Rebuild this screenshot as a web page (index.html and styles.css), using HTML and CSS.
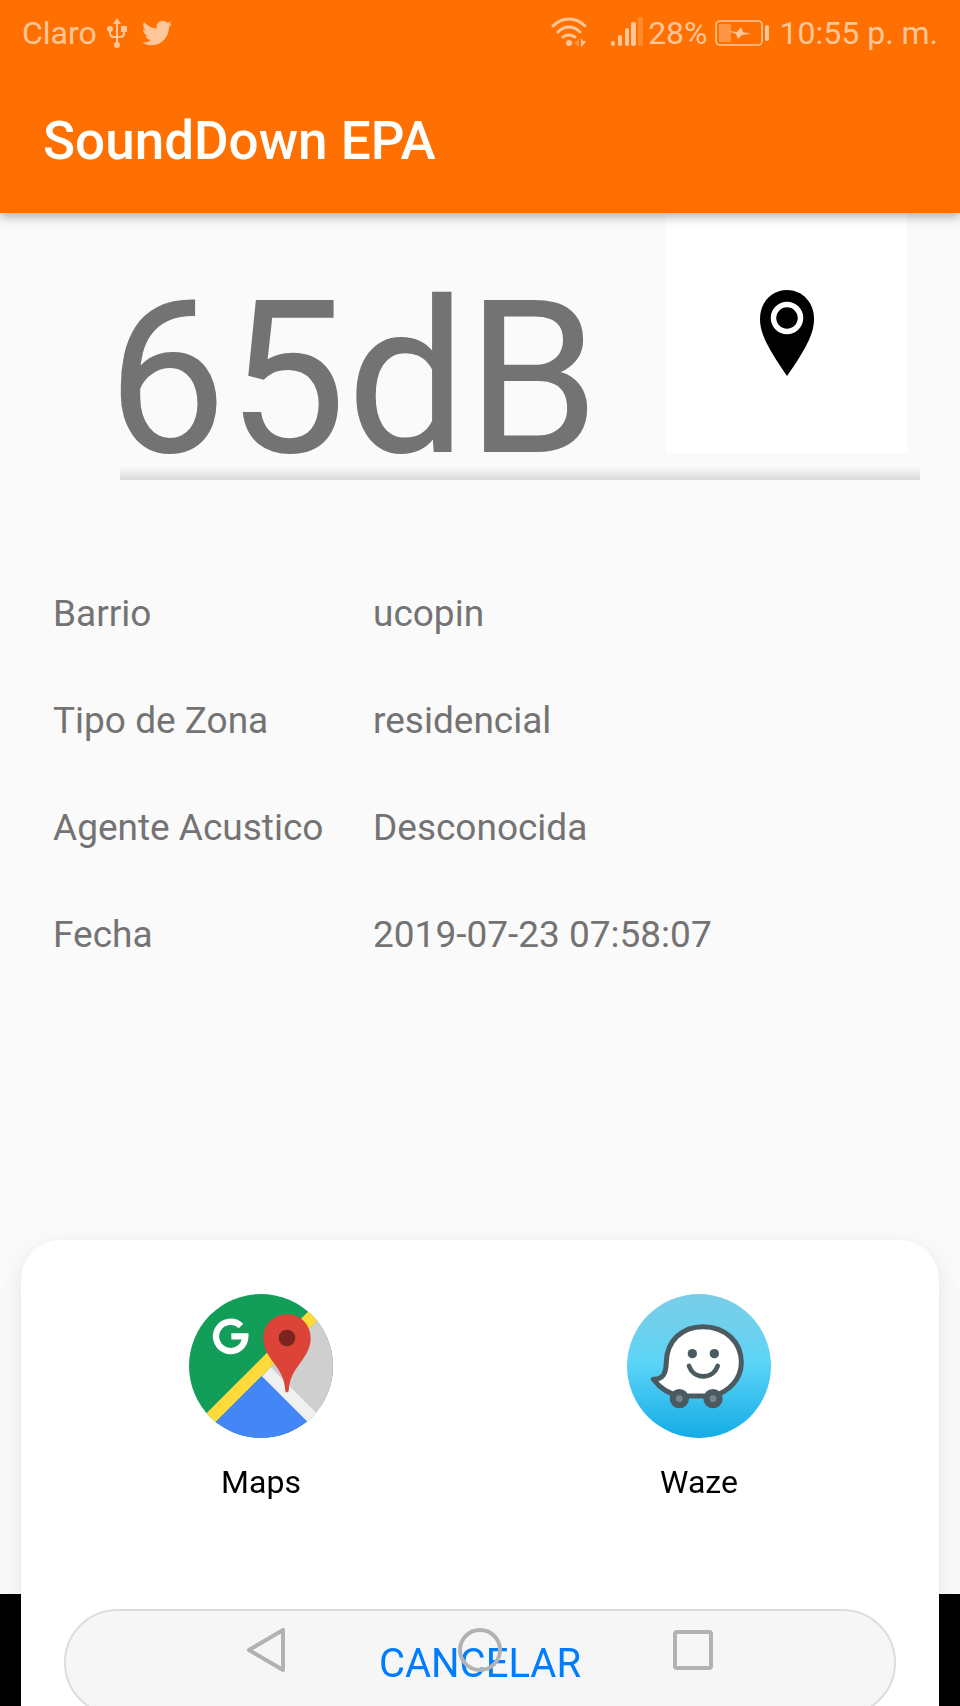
FILE: index.html
```html
<!DOCTYPE html>
<html lang="es">
<head>
<meta charset="utf-8">
<meta name="viewport" content="width=device-width, initial-scale=1">
<title>SoundDown EPA</title>
<link rel="stylesheet" href="styles.css">
</head>
<body>
<div class="screen">
  <header class="top">
    <div class="status">
      <div class="status-group">
        <span class="carrier">Claro</span>
        <svg class="usb" width="20" height="32" viewBox="0 0 20 32" aria-hidden="true">
          <path d="M10 4v22M3 12v4q0 4 4 4h6q4 0 4-4v-4" fill="none" stroke="currentColor" stroke-width="2"/>
          <path d="M10 1l4 6H6z" fill="currentColor"/>
          <circle cx="3" cy="12" r="3" fill="currentColor"/>
          <path d="M14 9h6v6h-6z" fill="currentColor"/>
          <circle cx="10" cy="28" r="3" fill="currentColor"/>
        </svg>
        <svg class="bird" width="30" height="30" viewBox="0 0 24 24" aria-hidden="true">
          <path fill="currentColor" d="M23.953 4.57a10 10 0 0 1-2.825.775 4.958 4.958 0 0 0 2.163-2.723c-.951.555-2.005.959-3.127 1.184a4.92 4.92 0 0 0-8.384 4.482C7.69 8.095 4.067 6.13 1.64 3.162a4.822 4.822 0 0 0-.666 2.475c0 1.71.87 3.213 2.188 4.096a4.904 4.904 0 0 1-2.228-.616v.06a4.923 4.923 0 0 0 3.946 4.827 4.996 4.996 0 0 1-2.212.085 4.936 4.936 0 0 0 4.604 3.417 9.867 9.867 0 0 1-6.102 2.105c-.39 0-.779-.023-1.17-.067a13.995 13.995 0 0 0 7.557 2.209c9.053 0 13.998-7.496 13.998-13.985 0-.21 0-.42-.015-.63A9.935 9.935 0 0 0 24 4.59z"/>
        </svg>
      </div>
      <div class="status-group">
        <svg class="wifi" width="36" height="32" viewBox="0 0 36 32" aria-hidden="true">
          <g fill="none" stroke="currentColor" stroke-width="3" stroke-linecap="round">
            <path d="M2 9Q9 2 18 2T34 9"/>
            <path d="M7 15Q12 10 18 10T29 15"/>
            <path d="M12 20Q15 18 18 18T24 20"/>
          </g>
          <circle cx="18" cy="26" r="3" fill="currentColor"/>
          <path d="M28 22v8l-5-4z" fill="currentColor" opacity=".45"/>
          <path d="M30 21l2 3h3l-1 2-4 4z" fill="currentColor"/>
        </svg>
        <svg class="signal" width="32" height="32" viewBox="0 0 32 32" aria-hidden="true">
          <g fill="currentColor">
            <rect y="24" width="4" height="5" rx="2"/>
            <rect x="7" y="18" width="4" height="11" rx="2"/>
            <rect x="14" y="11" width="4" height="18" rx="2"/>
            <rect x="20" y="5" width="5" height="24" rx="2"/>
            <rect x="27" width="5" height="29" rx="2" opacity=".3"/>
          </g>
        </svg>
        <span class="percent">28%</span>
        <svg class="battery" width="55" height="32" viewBox="0 0 55 32" aria-hidden="true">
          <rect x="1" y="4" width="46" height="24" rx="4" fill="none" stroke="currentColor" stroke-width="1.6"/>
          <rect x="4" y="7" width="12" height="18" fill="currentColor" opacity=".45"/>
          <rect x="50" y="8" width="4" height="16" rx="2" fill="currentColor"/>
          <path fill="currentColor" d="M13 14l9 1 4-5 2 5 8 2-9 1-4 4-2-5z"/>
        </svg>
        <span>10:55 p. m.</span>
      </div>
    </div>
    <h1 class="title">SoundDown EPA</h1>
  </header>

  <main class="content">
    <section class="hero">
      <div class="reading">65dB</div>
      <button class="locate" type="button" aria-label="Ubicación">
        <svg width="54" height="86" viewBox="0 0 54 86" aria-hidden="true">
          <path d="M27 0C12 0 0 12 0 29c0 13 6 27 27 57 21-30 27-44 27-57C54 12 42 0 27 0z"/>
          <circle cx="27" cy="28" r="13.5" fill="none" stroke="#fff" stroke-width="5.5"/>
        </svg>
      </button>
    </section>
    <div class="divider"></div>
    <dl class="details">
      <dt>Barrio</dt><dd>ucopin</dd>
      <dt>Tipo de Zona</dt><dd>residencial</dd>
      <dt>Agente Acustico</dt><dd>Desconocida</dd>
      <dt>Fecha</dt><dd>2019-07-23 07:58:07</dd>
    </dl>
  </main>
</div>

<div class="overlay">
  <section class="sheet" role="dialog" aria-label="Abrir con">
    <div class="apps">
      <button class="app" type="button">
        <svg width="144" height="144" viewBox="0 0 432 432" aria-hidden="true">
          <defs><clipPath id="disc"><circle cx="216" cy="216" r="216"/></clipPath></defs>
          <g clip-path="url(#disc)">
            <path fill="#129d58" d="M0 0h432v432H0z"/>
            <path fill="#cfcfcf" d="M382 82L216 248l216 216V32z"/>
            <path fill="#f0f0f0" d="M218 248l27-28 164 164-28 28z"/>
            <path fill="#fedb3b" d="M0 410L408 2l27 27L0 464z"/>
            <path fill="#4486f5" d="M218 246L20 444h396z"/>
          </g>
          <path fill="#dc4437" d="M294 61c-40 0-71 31-71 71 0 28 12 48 32 76 25 34 31 50 34 82 1 6 9 6 10 0 3-32 9-48 34-82 20-28 32-48 32-76 0-40-31-71-71-71z"/>
          <circle cx="294" cy="132" r="25" fill="#7b231e"/>
          <path d="M156 96A44 44 0 1 0 169 127H127" fill="none" stroke="#fff" stroke-width="19"/>
        </svg>
        <span>Maps</span>
      </button>
      <button class="app" type="button">
        <svg width="144" height="144" viewBox="0 0 432 432" aria-hidden="true">
          <defs>
            <linearGradient id="sky" x1="0" y1="0" x2="0" y2="1">
              <stop offset="0" stop-color="#79cde8"/>
              <stop offset=".25" stop-color="#6dd1ee"/>
              <stop offset=".48" stop-color="#5bd4f7"/>
              <stop offset="1" stop-color="#14ace6"/>
            </linearGradient>
          </defs>
          <circle cx="216" cy="216" r="216" fill="url(#sky)"/>
          <path d="M79 256C108 256 117 240 118 203C120 141 164 98 228 98C295 98 343 144 343 205C343 256 307 291 261 306H160C125 301 98 281 79 256z" fill="#fff" stroke="#4a5a60" stroke-width="15" stroke-linejoin="round"/>
          <g fill="#4a5a60">
            <circle cx="157" cy="314" r="29"/><circle cx="258" cy="314" r="29"/>
            <circle cx="196" cy="179" r="14"/><circle cx="262" cy="179" r="14"/>
          </g>
          <g fill="#79858a"><circle cx="157" cy="314" r="10"/><circle cx="258" cy="314" r="10"/></g>
          <path d="M186 216c6 18 22 31 43 31s37-13 43-31" fill="none" stroke="#4a5a60" stroke-width="14" stroke-linecap="round"/>
        </svg>
        <span>Waze</span>
      </button>
    </div>
    <button class="cancel" type="button">CANCELAR</button>
  </section>
</div>

<nav class="nav" aria-label="Sistema">
  <button type="button" aria-label="Atrás">
    <svg width="44" height="44" viewBox="0 0 44 44" aria-hidden="true"><path d="M4 22L38 2V42z"/></svg>
  </button>
  <button type="button" aria-label="Inicio">
    <svg width="44" height="44" viewBox="0 0 44 44" aria-hidden="true"><circle cx="22" cy="22" r="20"/></svg>
  </button>
  <button type="button" aria-label="Recientes">
    <svg width="44" height="44" viewBox="0 0 44 44" aria-hidden="true"><rect x="4" y="4" width="36" height="36" rx="2"/></svg>
  </button>
</nav>
</body>
</html>
```
FILE: styles.css
```css
* {
  box-sizing: border-box;
}

body {
  margin: 0;
  background: #000;
  color: #737373;
  font-family: Roboto, "Liberation Sans", sans-serif;
}

button {
  margin: 0;
  padding: 0;
  border: 0;
  background: none;
  color: inherit;
  font: inherit;
}

svg {
  display: block;
  flex: none;
}

/* Leaves room below for the system navigation bar */
.screen {
  display: flex;
  flex-direction: column;
  min-height: 100vh;
  padding-bottom: 112px;
}

.top {
  position: relative;
  z-index: 1;
  background: #ff7000;
  box-shadow: 0 4px 10px rgba(0, 0, 0, 0.3);
}

.status {
  display: flex;
  justify-content: space-between;
  height: 66px;
  padding: 0 22px;
  color: #ffc699;
  font-size: 32px;
  line-height: 66px;
}

.status-group {
  display: flex;
  align-items: center;
}

.usb {
  margin-left: 10px;
}

.bird {
  margin-left: 15px;
}

.signal {
  margin-left: 24px;
}

.percent {
  margin-left: 5px;
}

.battery {
  margin: 0 10px 0 7px;
}

.title {
  margin: 0;
  padding: 3px 43px 0;
  color: #fff;
  font-size: 53px;
  font-weight: 500;
  line-height: 144px;
}

.content {
  flex: 1;
  background: #fafafa;
}

.hero {
  display: flex;
  align-items: flex-end;
  justify-content: space-between;
  padding: 0 53px 0 107px;
}

.reading {
  font-size: 213px;
  line-height: 148px;
}

.locate {
  display: flex;
  align-items: center;
  justify-content: center;
  width: 241px;
  height: 240px;
  background: #fff;
}

.divider {
  height: 14px;
  margin: 13px 40px 0 120px;
  background: linear-gradient(#fafafa, #ececec 50%, #dadada);
}

.details {
  display: grid;
  grid-template-columns: 320px 1fr;
  margin: 80px 0 0;
  padding: 0 53px;
  font-size: 37px;
  line-height: 107px;
}

.details dd {
  margin: 0;
}

.overlay {
  position: fixed;
  inset: 0;
  z-index: 2;
  overflow: hidden;
}

.sheet {
  position: absolute;
  right: 21px;
  bottom: -40px;
  left: 21px;
  padding: 54px 21px 30px;
  border-radius: 40px;
  background: #fff;
  box-shadow: 0 8px 24px rgba(0, 0, 0, 0.09);
}

.apps {
  display: grid;
  grid-template-columns: 1fr 1fr;
}

.app {
  display: flex;
  flex-direction: column;
  align-items: center;
  gap: 24px;
  color: #000;
  font-size: 32px;
  line-height: 40px;
}

.cancel {
  display: block;
  width: calc(100% - 44px);
  height: 107px;
  margin: 107px 22px 0;
  padding-top: 2px;
  border: 2px solid #dcdcdc;
  border-radius: 54px;
  background: #f6f6f6;
  color: #007dff;
  font-size: 40px;
}

.nav {
  position: fixed;
  right: 0;
  bottom: 0;
  left: 0;
  z-index: 3;
  display: grid;
  grid-template-columns: repeat(3, 1fr);
  height: 112px;
  padding: 0 160px;
}

.nav button {
  display: flex;
  align-items: center;
  justify-content: center;
}

.nav svg {
  fill: none;
  stroke: #b2b2b2;
  stroke-width: 4;
  stroke-linejoin: round;
}
```
